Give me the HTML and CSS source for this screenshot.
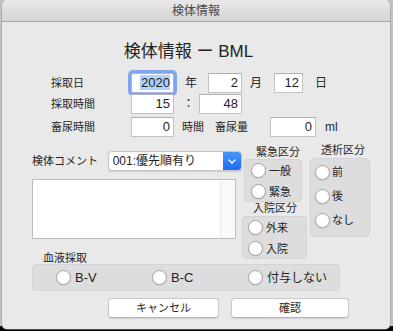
FILE: index.html
```html
<!DOCTYPE html>
<html lang="ja">
<head>
<meta charset="utf-8">
<title>検体情報</title>
<link rel="stylesheet" href="styles.css">
</head>
<body>
<div class="window">
  <div class="titlebar">検体情報</div>
  <div class="content">
    <h1 class="heading">検体情報 ー BML</h1>

    <div class="row row1">
      <span class="lbl">採取日</span>
      <span class="field w43 focus"><span class="selected">2020</span></span>
      <span class="unit u-year">年</span>
      <span class="field w34">2</span>
      <span class="unit u-month">月</span>
      <span class="field w29">12</span>
      <span class="unit u-day">日</span>
    </div>
    <div class="row row2">
      <span class="lbl">採取時間</span>
      <span class="field w43">15</span>
      <span class="unit u-colon">：</span>
      <span class="field w43">48</span>
    </div>
    <div class="row row3">
      <span class="lbl">畜尿時間</span>
      <span class="field w43">0</span>
      <span class="unit u-hours">時間</span>
      <span class="unit u-vol">畜尿量</span>
      <span class="field w46">0</span>
      <span class="unit u-ml">ml</span>
    </div>

    <div class="middle">
      <div class="leftcol">
        <div class="comment-row">
          <span class="lbl-c">検体コメント</span>
          <div class="select">
            <span class="select-text">001:優先順有り</span>
            <span class="select-btn">
              <svg width="8" height="5" viewBox="0 0 8 5"><path d="M1 1 L4 4 L7 1" fill="none" stroke="#fff" stroke-width="1.4" stroke-linecap="round" stroke-linejoin="round"/></svg>
            </span>
          </div>
        </div>
        <div class="textarea"><div class="scrolltrack"></div></div>
        <div class="blood-label">血液採取</div>
      </div>

      <div class="col1">
        <div class="glabel gl-urgent">緊急区分</div>
        <div class="gbox box1">
          <div class="radio"><span class="circle"></span><span>一般</span></div>
          <div class="radio"><span class="circle"></span><span>緊急</span></div>
        </div>
        <div class="glabel gl-inpatient">入院区分</div>
        <div class="gbox box2">
          <div class="radio"><span class="circle"></span><span>外来</span></div>
          <div class="radio"><span class="circle"></span><span>入院</span></div>
        </div>
      </div>

      <div class="col2">
        <div class="glabel gl-dialysis">透析区分</div>
        <div class="gbox box3">
          <div class="radio"><span class="circle"></span><span>前</span></div>
          <div class="radio"><span class="circle"></span><span>後</span></div>
          <div class="radio"><span class="circle"></span><span>なし</span></div>
        </div>
      </div>
    </div>

    <div class="gbox bloodbox">
      <div class="radio"><span class="circle"></span><span class="latin">B-V</span></div>
      <div class="radio"><span class="circle"></span><span class="latin">B-C</span></div>
      <div class="radio"><span class="circle"></span><span>付与しない</span></div>
    </div>

    <div class="buttons">
      <button class="btn btn-cancel">キャンセル</button>
      <button class="btn btn-ok">確認</button>
    </div>
  </div>
</div>
</body>
</html>
```

FILE: styles.css
```css
* { box-sizing: border-box; }

html, body {
  margin: 0;
  padding: 0;
}

body {
  width: 393px;
  height: 331px;
  overflow: hidden;
  background: linear-gradient(to bottom, #c2c2c2 0, #c2c2c2 326px, #000 326px);
  font-family: "Liberation Sans", "Noto Sans CJK JP", sans-serif;
  color: #262626;
}

.window {
  margin-left: 2px;
  width: 388px;
  height: 329px;
  background: #e9e9e9;
  border-radius: 5px;
  overflow: hidden;
  box-shadow: 0 0 0 0.5px #9a9a9a;
}

.titlebar {
  height: 22px;
  background: linear-gradient(to bottom, #e8e8e8, #d4d4d4);
  border-bottom: 1px solid #a8a8a8;
  text-align: center;
  font-size: 12px;
  line-height: 23px;
  color: #4a4a4a;
}

.content {
  padding-top: 20px;
}

.heading {
  margin: 0;
  padding-right: 15px;
  text-align: center;
  font-size: 17px;
  line-height: 20px;
  font-weight: normal;
  color: #222;
}

/* top rows */
.row {
  display: flex;
  align-items: center;
  height: 20px;
  margin-left: 49px;
  font-size: 11px;
}
.row1 { margin-top: 11px; }
.row2 { margin-top: 1px; }
.row3 { margin-top: 3px; }

.lbl {
  width: 80px;
  font-size: 11px;
  line-height: 14px;
}

.field {
  height: 20px;
  background: #fff;
  border: 1px solid #c2c2c2;
  border-top-color: #b0b0b0;
  text-align: right;
  padding-right: 3px;
  font-size: 13px;
  line-height: 18px;
  color: #1e1e1e;
}
.w43 { width: 43px; }
.w34 { width: 34px; }
.w29 { width: 29px; }
.w46 { width: 46px; }

.focus {
  border-color: #9db5ec;
  box-shadow: 0 0 0 3px #80a5ef;
  border-radius: 2px;
}
.selected {
  background: #b3d2fb;
  padding: 0 0 0 1px;
}

.unit {
  font-size: 12px;
  line-height: 14px;
}
.u-year { width: 23px; margin-left: 11px; }
.u-month { width: 32px; padding-left: 8px; }
.u-day { padding-left: 12px; }
.u-colon { width: 25px; padding-left: 4px; text-align: center; font-size: 12px; }
.u-hours { width: 41px; padding-left: 8px; font-size: 11px; }
.u-vol { width: 55px; font-size: 11px; }
.u-ml { padding-left: 9px; font-size: 12px; }

/* middle */
.middle {
  display: flex;
  align-items: flex-start;
  margin-top: 7px;
  height: 120px;
}

.leftcol {
  width: 210px;
  margin-left: 30px;
}

.comment-row {
  display: flex;
  align-items: center;
  margin-top: 7px;
  height: 20px;
}
.lbl-c {
  width: 76px;
  font-size: 11px;
  line-height: 14px;
}
.select {
  width: 135px;
  height: 20px;
  display: flex;
  background: #fff;
  border: 1px solid #c6c6c6;
  border-radius: 4px;
  overflow: hidden;
  box-shadow: 0 0.5px 1px rgba(0,0,0,0.12);
}
.select-text {
  flex: 1;
  padding-left: 4px;
  font-size: 12px;
  line-height: 18px;
  color: #1e1e1e;
}
.select-btn {
  width: 18px;
  display: flex;
  align-items: center;
  justify-content: center;
  background: linear-gradient(to bottom, #4a94fb, #1c6ef2);
}

.textarea {
  margin-top: 8px;
  width: 204px;
  height: 60px;
  background: #fff;
  border: 1px solid #bdbdbd;
  display: flex;
  justify-content: flex-end;
}
.scrolltrack {
  width: 15px;
  background: #fafafa;
  border-left: 1px solid #ececec;
}

.blood-label {
  margin-top: 13px;
  margin-left: 11px;
  font-size: 11px;
  line-height: 12px;
}

.col1 {
  width: 65px;
}
.col2 {
  width: 60px;
  margin-left: 3px;
}

.glabel {
  font-size: 11px;
  line-height: 14px;
  color: #262626;
}
.gl-urgent { margin-top: 1px; padding-left: 14px; }
.gl-inpatient { margin-top: -1px; padding-left: 11px; }
.gl-dialysis { padding-left: 11px; line-height: 12px; }

.gbox {
  background: #dddddd;
  border: 1px solid #d4d4d4;
  border-radius: 4px;
}

.box1 {
  margin-left: 2px;
  width: 58px;
  height: 43px;
}
.box1 .radio { height: 21px; padding-left: 6px; }

.box2 {
  margin-top: 1px;
  width: 65px;
  height: 43px;
}
.box2 .radio { height: 21px; padding-left: 5px; }

.box3 {
  margin-top: 2px;
  width: 60px;
  height: 79px;
  padding-top: 1px;
}
.box3 .radio { height: 24px; padding-left: 4px; }
.box3 .circle { margin-right: 2px; }

.radio {
  display: flex;
  align-items: center;
  font-size: 11px;
  line-height: 14px;
  color: #222;
}
.circle {
  width: 15px;
  height: 15px;
  border-radius: 50%;
  background: #fff;
  border: 1px solid #a4a4a4;
  box-shadow: 0 0.5px 1px rgba(0,0,0,0.15);
  margin-right: 3px;
  flex: none;
}

.bloodbox {
  margin-left: 30px;
  width: 308px;
  height: 27px;
  display: grid;
  grid-template-columns: 96px 96px 1fr;
  padding-left: 23px;
}
.bloodbox .radio {
  height: 25px;
  font-size: 12px;
}
.bloodbox .circle { margin-right: 4px; }
.latin { font-size: 13px; }

.buttons {
  display: flex;
  gap: 12px;
  margin-left: 106px;
  margin-top: 7px;
}
.btn {
  height: 20px;
  background: #fff;
  border: 1px solid #c9c9c9;
  border-bottom-color: #b5b5b5;
  border-radius: 4px;
  font-family: "Liberation Sans", "Noto Sans CJK JP", sans-serif;
  font-size: 11px;
  line-height: 18px;
  color: #262626;
  padding: 0;
  box-shadow: 0 0.5px 1px rgba(0,0,0,0.1);
}
.btn-cancel { width: 111px; }
.btn-ok { width: 118px; }
```
